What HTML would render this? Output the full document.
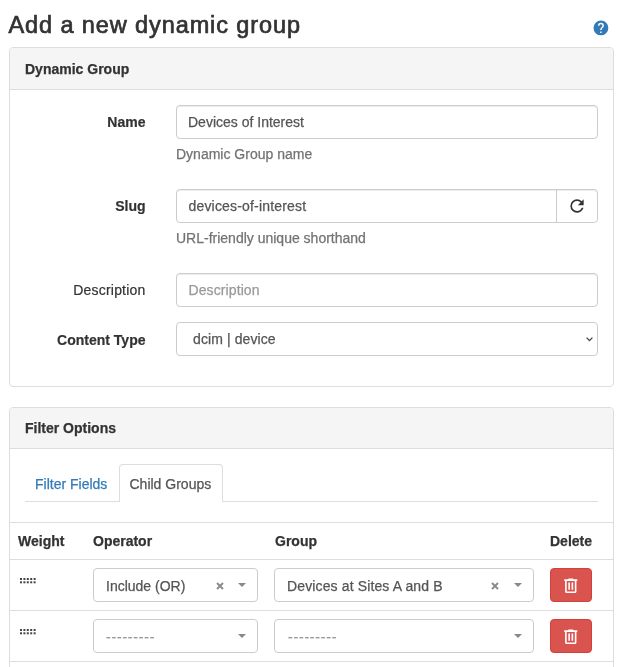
<!DOCTYPE html>
<html>
<head>
<meta charset="utf-8">
<style>
html,body{margin:0;padding:0;background:#fff;}
body{width:631px;height:667px;overflow:hidden;position:relative;will-change:transform;font-family:"Liberation Sans",sans-serif;font-size:14px;color:#333;}
.a{position:absolute;}
.t{position:absolute;line-height:20px;white-space:nowrap;-webkit-text-stroke-width:0.25px;}
.lbl{-webkit-text-stroke-width:0.2px;}
.b{font-weight:bold;}
.panel{position:absolute;border:1px solid #ddd;border-radius:4px;box-sizing:border-box;background:#fff;}
.ph{position:absolute;left:0;right:0;top:0;background:#f5f5f5;border-bottom:1px solid #ddd;border-radius:3px 3px 0 0;box-sizing:border-box;}
.inp{position:absolute;border:1px solid #ccc;border-radius:4px;box-sizing:border-box;background:#fff;box-shadow:inset 0 1px 1px rgba(0,0,0,.075);}
.lbl{position:absolute;line-height:20px;white-space:nowrap;text-align:right;font-weight:bold;}
.help{color:#737373;}
.hr{position:absolute;height:1px;background:#ddd;}
</style>
</head>
<body>
<!-- Title -->
<div class="t" style="left:8.5px;top:10px;font-size:23.5px;line-height:30px;letter-spacing:0.9px;color:#333;-webkit-text-stroke-width:0.7px;">Add a new dynamic group</div>
<!-- help icon -->
<svg class="a" style="left:592.3px;top:19px" width="17.8" height="17.8" viewBox="0 0 24 24"><path fill="#337ab7" fill-rule="evenodd" d="M15.07,11.25L14.17,12.17C13.45,12.89 13,13.5 13,15H11V14.5C11,13.39 11.45,12.39 12.17,11.67L13.41,10.41C13.78,10.05 14,9.55 14,9C14,7.89 13.1,7 12,7A2,2 0 0,0 10,9H8A4,4 0 0,1 12,5A4,4 0 0,1 16,9C16,9.880 15.64,10.67 15.07,11.25M13,19H11V17H13M12,2A10,10 0 0,0 2,12A10,10 0 0,0 12,22A10,10 0 0,0 22,12C22,6.47 17.5,2 12,2Z"/></svg>

<!-- Panel 1 -->
<div class="panel" style="left:9px;top:47px;width:605px;height:340px;">
  <div class="ph" style="height:42px;"></div>
</div>
<div class="t b" style="left:25px;top:59px;">Dynamic Group</div>

<!-- Name -->
<div class="lbl" style="right:485.5px;top:111.5px;">Name</div>
<div class="inp" style="left:176px;top:105px;width:422px;height:34px;"></div>
<div class="t" style="left:188px;top:112px;color:#555;">Devices of Interest</div>
<div class="t help" style="left:176px;top:144px;">Dynamic Group name</div>

<!-- Slug -->
<div class="lbl" style="right:485.5px;top:196px;">Slug</div>
<div class="inp" style="left:176px;top:189px;width:422px;height:34px;"></div>
<div class="a" style="left:556px;top:190px;width:1px;height:32px;background:#ccc;"></div>
<div class="t" style="left:188.5px;top:196px;color:#555;letter-spacing:0.18px;">devices-of-interest</div>
<svg class="a" style="left:567px;top:196px" width="20" height="20" viewBox="0 0 24 24"><path fill="#333" d="M17.65,6.35C16.2,4.9 14.21,4 12,4A8,8 0 0,0 4,12A8,8 0 0,0 12,20C15.73,20 18.84,17.45 19.73,14H17.65C16.83,16.330 14.61,18 12,18A6,6 0 0,1 6,12A6,6 0 0,1 12,6C13.660,6 15.14,6.69 16.22,7.78L13,11H20V4L17.65,6.35Z"/></svg>
<div class="t help" style="left:176px;top:228px;">URL-friendly unique shorthand</div>

<!-- Description -->
<div class="lbl" style="right:485.5px;top:280px;font-weight:normal;letter-spacing:0.2px;">Description</div>
<div class="inp" style="left:176px;top:273px;width:422px;height:34px;"></div>
<div class="t" style="left:188.5px;top:280px;color:#999;letter-spacing:0.1px;">Description</div>

<!-- Content Type -->
<div class="lbl" style="right:485.5px;top:329.5px;">Content Type</div>
<div class="inp" style="left:176px;top:322px;width:422px;height:34px;box-shadow:none;"></div>
<div class="t" style="left:193px;top:329px;color:#555;letter-spacing:0.1px;">dcim | device</div>
<svg class="a" style="left:585px;top:335px" width="9" height="8" viewBox="0 0 9 8"><path d="M1.6,2.6 L4.5,5.6 L7.4,2.6" fill="none" stroke="#444" stroke-width="1.35"/></svg>

<!-- Panel 2 -->
<div class="panel" style="left:9px;top:407px;width:605px;height:300px;">
  <div class="ph" style="height:41px;"></div>
</div>
<div class="t b" style="left:25px;top:418px;">Filter Options</div>

<!-- Tabs -->
<div class="hr" style="left:25px;top:501px;width:573px;"></div>
<div class="a" style="left:119px;top:464px;width:104px;height:38px;box-sizing:border-box;border:1px solid #ddd;border-bottom:none;border-radius:4px 4px 0 0;background:#fff;"></div>
<div class="t" style="left:35px;top:474px;color:#337ab7;">Filter Fields</div>
<div class="t" style="left:129.5px;top:474px;color:#555;">Child Groups</div>

<!-- Table -->
<div class="hr" style="left:10px;top:522px;width:603px;"></div>
<div class="t b" style="left:18px;top:531px;">Weight</div>
<div class="t b" style="left:93px;top:531px;">Operator</div>
<div class="t b" style="left:275px;top:531px;">Group</div>
<div class="t b" style="left:550px;top:531px;">Delete</div>
<div class="hr" style="left:10px;top:559px;width:603px;"></div>

<!-- Row 1 -->
<svg class="a" style="left:19px;top:577px" width="18" height="8" viewBox="0 0 18 8">
  <g fill="#444">
    <rect x="1" y="1" width="2" height="2"/><rect x="4.4" y="1" width="2" height="2"/><rect x="7.8" y="1" width="2" height="2"/><rect x="11.2" y="1" width="2" height="2"/><rect x="14.6" y="1" width="2" height="2"/>
    <rect x="1" y="4.3" width="2" height="2"/><rect x="4.4" y="4.3" width="2" height="2"/><rect x="7.8" y="4.3" width="2" height="2"/><rect x="11.2" y="4.3" width="2" height="2"/><rect x="14.6" y="4.3" width="2" height="2"/>
  </g>
</svg>
<div class="inp" style="left:93px;top:568px;width:165px;height:34px;box-shadow:none;border-color:#ccc;"></div>
<div class="t" style="left:106px;top:576px;color:#555;">Include (OR)</div>
<svg class="a" style="left:215.5px;top:582px" width="8" height="8" viewBox="0 0 8 8"><path d="M1,1 L7,7 M7,1 L1,7" stroke="#8a8a8a" stroke-width="1.9" fill="none"/></svg>
<svg class="a" style="left:238px;top:583px" width="9" height="5" viewBox="0 0 9 5"><path d="M0,0 L8,0 L4,4 Z" fill="#888"/></svg>

<div class="inp" style="left:274px;top:568px;width:260px;height:34px;box-shadow:none;"></div>
<div class="t" style="left:287px;top:576px;color:#555;letter-spacing:0.13px;">Devices at Sites A and B</div>
<svg class="a" style="left:490.5px;top:582px" width="8" height="8" viewBox="0 0 8 8"><path d="M1,1 L7,7 M7,1 L1,7" stroke="#8a8a8a" stroke-width="1.9" fill="none"/></svg>
<svg class="a" style="left:514px;top:583px" width="9" height="5" viewBox="0 0 9 5"><path d="M0,0 L8,0 L4,4 Z" fill="#888"/></svg>

<div class="a" style="left:550px;top:568px;width:42px;height:34px;box-sizing:border-box;background:#d9534f;border:1px solid #d43f3a;border-radius:4px;"></div>
<svg class="a" style="left:561px;top:575.5px" width="19.5" height="19.5" viewBox="0 0 24 24"><path fill="#fff" d="M9,3V4H4V6H5V19A2,2 0 0,0 7,21H17A2,2 0 0,0 19,19V6H20V4H15V3H9M7,6H17V19H7V6M9,8V17H11V8H9M13,8V17H15V8H13Z"/></svg>
<div class="hr" style="left:10px;top:610px;width:603px;"></div>

<!-- Row 2 -->
<svg class="a" style="left:19px;top:628px" width="18" height="8" viewBox="0 0 18 8">
  <g fill="#444">
    <rect x="1" y="1" width="2" height="2"/><rect x="4.4" y="1" width="2" height="2"/><rect x="7.8" y="1" width="2" height="2"/><rect x="11.2" y="1" width="2" height="2"/><rect x="14.6" y="1" width="2" height="2"/>
    <rect x="1" y="4.3" width="2" height="2"/><rect x="4.4" y="4.3" width="2" height="2"/><rect x="7.8" y="4.3" width="2" height="2"/><rect x="11.2" y="4.3" width="2" height="2"/><rect x="14.6" y="4.3" width="2" height="2"/>
  </g>
</svg>
<div class="inp" style="left:93px;top:619px;width:165px;height:34px;box-shadow:none;"></div>
<div class="t" style="left:106px;top:627px;color:#999;letter-spacing:0.8px;">---------</div>
<svg class="a" style="left:238px;top:634px" width="9" height="5" viewBox="0 0 9 5"><path d="M0,0 L8,0 L4,4 Z" fill="#888"/></svg>

<div class="inp" style="left:274px;top:619px;width:260px;height:34px;box-shadow:none;"></div>
<div class="t" style="left:288px;top:627px;color:#999;letter-spacing:0.8px;">---------</div>
<svg class="a" style="left:514px;top:634px" width="9" height="5" viewBox="0 0 9 5"><path d="M0,0 L8,0 L4,4 Z" fill="#888"/></svg>

<div class="a" style="left:550px;top:619px;width:42px;height:34px;box-sizing:border-box;background:#d9534f;border:1px solid #d43f3a;border-radius:4px;"></div>
<svg class="a" style="left:561px;top:626.5px" width="19.5" height="19.5" viewBox="0 0 24 24"><path fill="#fff" d="M9,3V4H4V6H5V19A2,2 0 0,0 7,21H17A2,2 0 0,0 19,19V6H20V4H15V3H9M7,6H17V19H7V6M9,8V17H11V8H9M13,8V17H15V8H13Z"/></svg>
<div class="hr" style="left:10px;top:661px;width:603px;"></div>

</body>
</html>
